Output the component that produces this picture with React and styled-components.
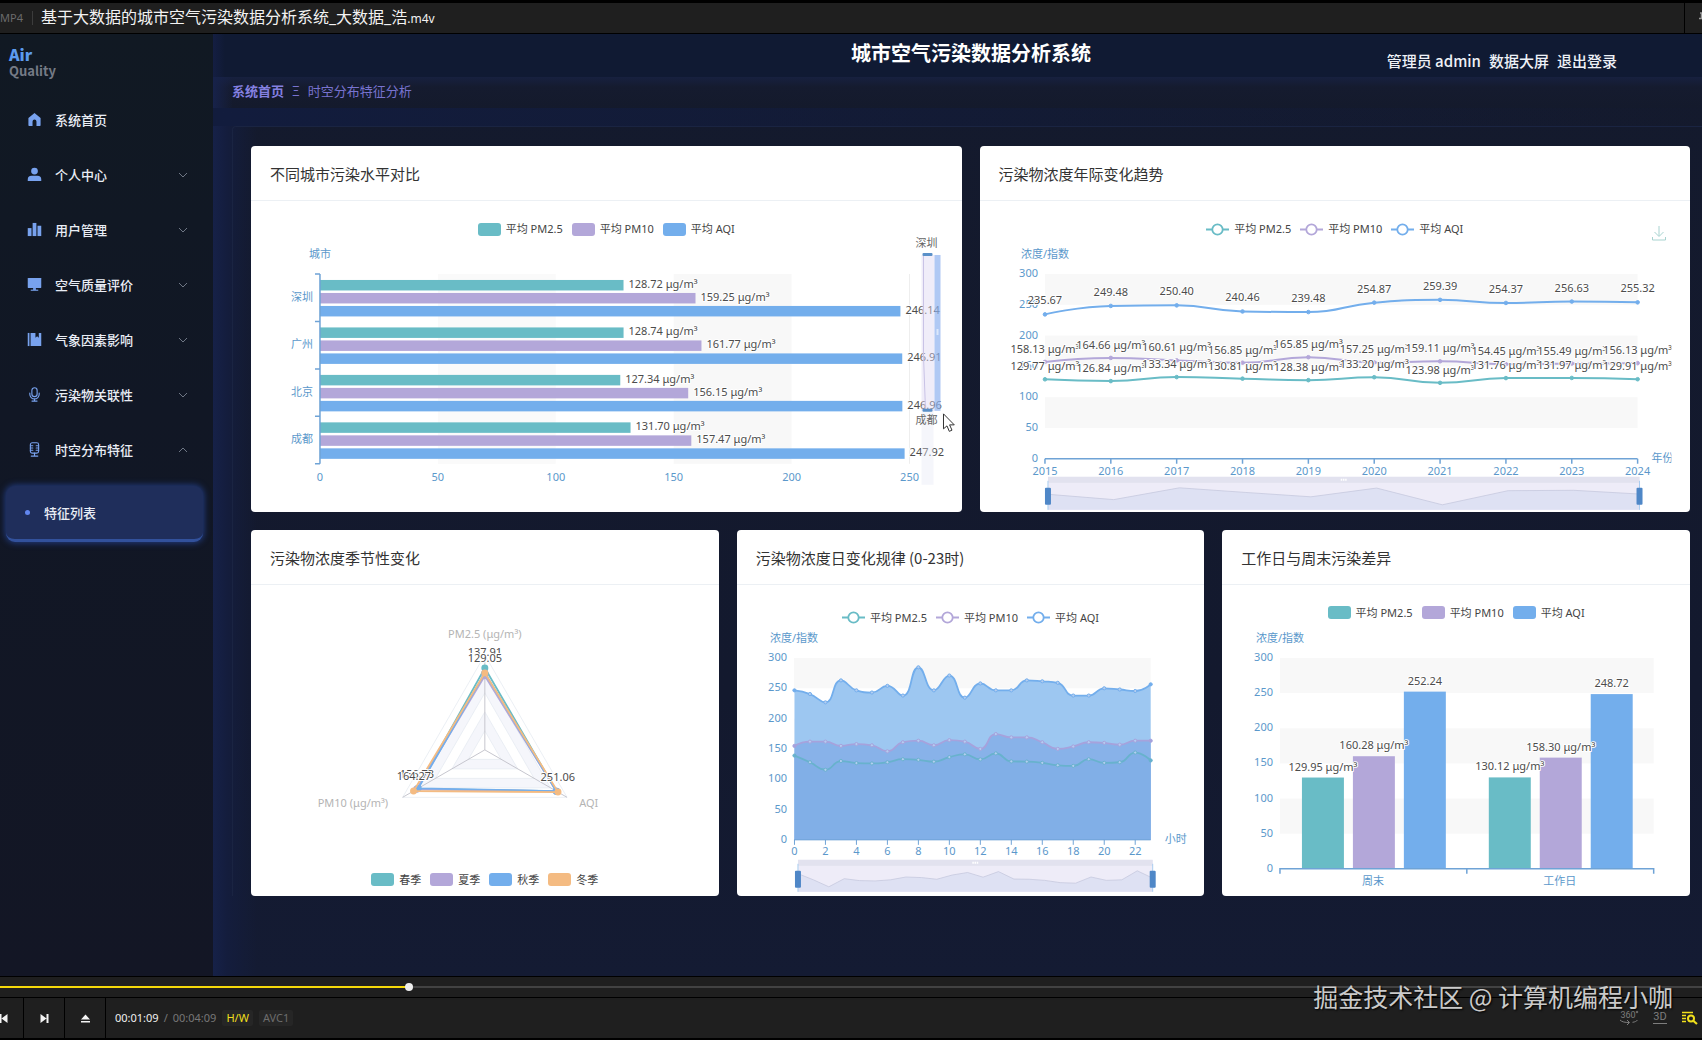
import React from "react";
import styled, { createGlobalStyle, css } from "styled-components";

const C = {
  teal: "#69bcc6",
  purple: "#b3a7d9",
  blue: "#73aeec",
  orange: "#f4bb82",
  axis: "#5b98cb",
  axisLine: "#6fa3d6",
  label: "#4c4c4c",
  band: "#f8f8f8",
};
const uiFont = '"Noto Sans CJK SC", "Noto Sans", sans-serif';
const chartFont = '"Noto Sans", "Noto Sans CJK SC", sans-serif';

const GlobalStyle = createGlobalStyle`
  *, *::before, *::after { box-sizing: border-box; }
  body { margin: 0; background: #000; font-family: ${uiFont}; overflow-x: hidden; }
  h1, h2, ul, ol { margin: 0; padding: 0; list-style: none; }
  button { border: 0; padding: 0; background: none; font: inherit; color: inherit; cursor: pointer; }
  a { color: inherit; text-decoration: none; }
`;

/* ---------- player frame ---------- */

const Frame = styled.div`
  position: relative;
  display: flex;
  flex-direction: column;
  min-height: 100vh;
`;
const TitleBar = styled.header`
  display: flex;
  align-items: center;
  height: 34px;
  border-top: 3px solid #000;
  border-bottom: 1px solid #000;
  background: #1f1f1f;
  color: #f2f2f2;
  font: 16px/30px ${chartFont};
  white-space: nowrap;
  overflow: hidden;
`;
const FileKind = styled.span`
  width: 33px;
  height: 14px;
  border-right: 1px solid #3c3c3c;
  margin-right: 8px;
  font-size: 11px;
  line-height: 14px;
  color: #6b6b6b;
`;
const FileExt = styled.span`
  font-size: 12px;
`;
const PinButton = styled.button`
  flex: none;
  display: flex;
  align-items: center;
  width: 18px;
  height: 30px;
  margin-left: auto;
  padding-left: 13px;
  border-left: 1px solid #000;
  overflow: hidden;
  color: #9a9a9a;
  svg { flex: none; }
`;
const SeekBar = styled.div`
  display: flex;
  align-items: center;
  height: 21px;
  border-top: 1px solid #000;
  background: #1f1f1f;
`;
const SeekInput = styled.input`
  appearance: none;
  width: 100%;
  height: 12px;
  margin: 0;
  background: linear-gradient(#f5d90a, #f5d90a) 0 5px / 24% 2px no-repeat,
    linear-gradient(#424242, #424242) 0 5px / 100% 2px no-repeat;
  &::-webkit-slider-thumb {
    appearance: none;
    width: 8px;
    height: 8px;
    border-radius: 50%;
    background: #eee;
  }
`;
const Controls = styled.footer`
  display: flex;
  align-items: center;
  height: 43px;
  border-top: 1px solid #000;
  border-bottom: 2px solid #000;
  background: #1f1f1f;
  font: 11px/16px ${chartFont};
  color: #777;
`;
const ControlButton = styled.button`
  display: flex;
  align-items: center;
  justify-content: ${(p) => (p.$edge ? "flex-start" : "center")};
  width: ${(p) => (p.$edge ? 24 : 41)}px;
  height: 40px;
  border-right: 1px solid #000;
  color: #f4f4f4;
`;
const Clock = styled.span`
  display: flex;
  gap: 5px;
  margin: 0 6px 0 9px;
  b { font-weight: 400; color: #f0f0f0; }
`;
const Codec = styled.span`
  margin-right: 6px;
  padding: 0 4px;
  border-radius: 2px;
  background: #262626;
  color: ${(p) => (p.$on ? "#f0df1c" : "#6d6d6d")};
`;
const ControlTools = styled.div`
  display: flex;
  align-items: center;
  gap: 14px;
  margin-left: auto;
  padding-right: 4px;
`;
const ToolIcon = styled.button`
  display: flex;
  color: ${(p) => (p.$on ? "#f0df1c" : "#7d7d7d")};
`;
const Watermark = styled.div`
  position: absolute;
  right: 29px;
  bottom: 26px;
  font: 25px/36px ${uiFont};
  color: #cacaca;
  text-shadow: 1px 1px 2px #000;
  white-space: nowrap;
  pointer-events: none;
`;

/* ---------- application ---------- */

const AppShell = styled.div`
  flex: 1;
  display: grid;
  grid-template-columns: 213px minmax(0, 1fr);
  background: #141a2d;
`;
const Sidebar = styled.aside`
  background: linear-gradient(#111923, #111725 40%, #131625);
`;
const Logo = styled.div`
  height: 58px;
  padding: 11px 9px 0;
  font-weight: 700;
  font-size: 13px;
  line-height: 16px;
  color: #757b86;
  strong {
    display: block;
    font-size: 16px;
    line-height: 18px;
    color: #5c9bee;
  }
`;
const MenuButton = styled.button`
  display: grid;
  grid-template-columns: 15px 1fr 10px;
  align-items: center;
  column-gap: 13px;
  width: 100%;
  height: 55px;
  padding: 0 25px 0 27px;
  text-align: left;
  font-size: 13px;
  font-weight: 500;
  color: #e9edf5;
`;
const SubLink = styled.a`
  display: flex;
  align-items: center;
  gap: 14px;
  height: 56px;
  margin: 9px 10px 0 6px;
  padding-left: 19px;
  border-radius: 9px;
  border-bottom: 3px solid #32519b;
  background: #1f2e5b;
  box-shadow: 0 0 6px 1px #223c80;
  font-size: 13px;
  font-weight: 500;
  color: #e9edf5;
  &::before {
    content: "";
    width: 5px;
    height: 5px;
    border-radius: 50%;
    background: #6287f0;
  }
`;
const Content = styled.div`
  min-width: 0;
  background: linear-gradient(90deg, #162148 0, #141d3d 14px, rgba(20, 26, 45, 0) 44px),
    linear-gradient(#141a2d, #13192e 70%, #141b33);
`;
const TopBar = styled.header`
  display: grid;
  grid-template-columns: 1fr auto 1fr;
  height: 43px;
  padding-left: 27px;
  background: linear-gradient(90deg, #141e42 0, rgba(16, 26, 50, 0) 12px), #101a33;
  color: #fff;
`;
const AppTitle = styled.h1`
  grid-column: 2;
  padding-top: 4px;
  font-size: 20px;
  line-height: 30px;
  font-weight: 700;
  white-space: nowrap;
`;
const UserNav = styled.nav`
  justify-self: end;
  display: flex;
  gap: 8px;
  padding: 17px 85px 0 0;
  font-size: 15px;
  line-height: 20px;
  font-weight: 500;
  color: #eef1f7;
  white-space: nowrap;
`;
const Breadcrumb = styled.nav`
  display: flex;
  align-items: center;
  gap: 8px;
  height: 31px;
  padding: 0 0 3px 19px;
  background: linear-gradient(90deg, #17224a 0, rgba(22, 30, 62, 0) 20px),
    linear-gradient(#17203f, #151b2f 10px, #141a2c);
  font-size: 13px;
  line-height: 20px;
  color: #7873cf;
  a { font-weight: 700; color: #8480e0; }
`;
const Stage = styled.main`
  padding: 18px 0 0 19px;
  background: linear-gradient(90deg, #121c3d, rgba(18, 28, 61, 0) 100%) 0 0 / 100% 18px no-repeat;
`;
const Panel = styled.div`
  display: flex;
  flex-direction: column;
  gap: 18px;
  padding: 19px 12px 0 18px;
  border-top: 1px solid #1a2442;
  border-left: 1px solid #1a2442;
  border-radius: 4px 0 0 0;
`;
const CardRow = styled.div`
  display: grid;
  grid-template-columns: repeat(${(p) => p.$columns}, minmax(0, 1fr));
  gap: 18px;
`;
const Card = styled.section`
  display: flex;
  flex-direction: column;
  border-radius: 4px;
  background: #fff;
  overflow: hidden;
`;
const CardTitle = styled.h2`
  height: 55px;
  padding: 0 19px;
  border-bottom: 1px solid #ecf0f4;
  font: 400 15px/56px ${uiFont};
  color: #333;
`;
const LegendRow = styled.div`
  position: relative;
  display: flex;
  justify-content: center;
  gap: 9px;
  padding-top: ${(p) => p.$top}px;
  ${(p) => p.$bottom && css`padding-bottom: ${p.$bottom}px;`}
`;
const LegendItem = styled.button`
  display: flex;
  align-items: center;
  gap: 5px;
  height: 20px;
  font: 11px/20px ${chartFont};
  color: #444;
`;
const Swatch = styled.i`
  width: 23px;
  height: 13px;
  border-radius: 3px;
  background: ${(p) => p.$color};
`;
const SaveButton = styled.button`
  position: absolute;
  top: 24px;
  right: 24px;
  color: #a8d3d0;
  svg { display: block; }
`;
const Chart = styled.svg`
  display: block;
  width: 100%;
  height: auto;
  overflow: visible;
  font: 11px ${chartFont};
  cursor: default;
`;
const AxisText = styled.text`
  fill: ${C.axis};
`;
const DataText = styled.text`
  fill: ${C.label};
  stroke: #fff;
  stroke-width: 2px;
  stroke-linejoin: round;
  paint-order: stroke;
`;

/* ---------- icons ---------- */

const Icon = ({ children, size = 15 }) => (
  <svg width={size} height={size} viewBox="0 0 16 16" fill="currentColor" aria-hidden="true">{children}</svg>
);
const MenuIcon = styled.span`
  display: flex;
  color: #78a2ee;
`;
const line = { fill: "none", stroke: "currentColor", strokeWidth: 1.2, strokeLinecap: "round", strokeLinejoin: "round" };
const icons = {
  home: <path d="M8 1 1.5 6.4V14a.8.8 0 0 0 .8.8h3.6V10a2.1 2.1 0 0 1 4.200 0v4.800h3.600a.8.8 0 0 0 .8-.8V6.400z" />,
  user: <><circle cx="8" cy="4.300" r="3.600" /><path d="M.8 15v-1.800A4 4 0 0 1 4.800 9.200h6.400a4 4 0 0 1 4 4V15z" /></>,
  bars: <><rect x="6" y="1" width="4" height="14" /><rect x=".8" y="6.500" width="4" height="8.500" /><rect x="11.200" y="4" width="4" height="11" /></>,
  screen: <><rect x=".8" y="1" width="14.400" height="10.800" rx=".5" /><rect x="6.500" y="11.800" width="3" height="2" /><rect x="4" y="13.500" width="8" height="1.200" /></>,
  book: <><rect x=".8" y="1" width="1.800" height="14" /><path d="M3.800 1h5.200v5l1.800-1.400L12.600 6V1h2.600v14H3.800z" /></>,
  mic: <g {...line}><rect x="5.200" y=".8" width="5.600" height="9.400" rx="2.800" /><path d="M3 6.500v1.200a5 5 0 0 0 10 0V6.500M8 12.700V15M5.300 15h5.400" /></g>,
  studio: <g {...line}><rect x="3.600" y=".8" width="8.800" height="11" rx="2" /><path d="M3.600 4h2.600M9.800 4h2.600M3.600 6.400h2.600M9.800 6.400h2.600M3.600 8.800h2.600M9.800 8.800h2.600M8 11.800V15M4.500 15h7" /></g>,
};
const Chevron = ({ open }) => (
  <svg width="10" height="6" viewBox="0 0 10 6" fill="none" stroke="#6f7785" aria-hidden="true">
    <path d={open ? "M1 5 5 1l4 4" : "M1 1l4 4 4-4"} />
  </svg>
);

const menu = [
  ["home", "系统首页"],
  ["user", "个人中心", "closed"],
  ["bars", "用户管理", "closed"],
  ["screen", "空气质量评价", "closed"],
  ["book", "气象因素影响", "closed"],
  ["mic", "污染物关联性", "closed"],
  ["studio", "时空分布特征", "open"],
];

/* ---------- chart parts ---------- */

const series3 = [
  ["平均 PM2.5", C.teal],
  ["平均 PM10", C.purple],
  ["平均 AQI", C.blue],
];

function Legend({ items, marker = "box", top = 18, bottom, children }) {
  return (
    <LegendRow $top={top} $bottom={bottom}>
      {items.map(([name, color]) => (
        <LegendItem key={name} type="button">
          {marker === "box" ? (
            <Swatch $color={color} />
          ) : (
            <svg width="23" height="13" viewBox="0 0 23 13" fill="#fff" stroke={color} strokeWidth="1.800" aria-hidden="true">
              <path d="M0 6.500h23" />
              <circle cx="11.500" cy="6.500" r="5.200" />
            </svg>
          )}
          {name}
        </LegendItem>
      ))}
      {children}
    </LegendRow>
  );
}

/* Smooth path whose control points stay inside the box of each segment. */
function smoothPath(pts, k = 0.5) {
  const clamp = (v, a, b) => Math.max(Math.min(a, b), Math.min(Math.max(a, b), v));
  const out = pts.map((p, i) => {
    const a = pts[i - 1];
    const b = pts[i + 1];
    if (!a || !b) return { prev: p, next: p };
    const la = Math.hypot(p[0] - a[0], p[1] - a[1]);
    const lb = Math.hypot(b[0] - p[0], b[1] - p[1]);
    const v = [b[0] - a[0], b[1] - a[1]];
    const r = lb / (la + lb);
    let next = [0, 1].map((d) => clamp(p[d] + v[d] * k * r, p[d], b[d]));
    const prev = [0, 1].map((d) => clamp(p[d] - ((next[d] - p[d]) * la) / lb, a[d], p[d]));
    next = [0, 1].map((d) => p[d] + ((p[d] - prev[d]) * lb) / la);
    return { prev, next };
  });
  return pts.reduce(
    (s, p, i) => (i ? `${s}C${out[i - 1].next} ${out[i].prev} ${p}` : `M${p}`),
    ""
  );
}

function ValueAxis({ left, right, top, bottom, labelX }) {
  const y = (v) => bottom - ((bottom - top) * v) / 300;
  return (
    <g>
      {[300, 200, 100].map((v) => (
        <rect key={v} x={left} y={y(v)} width={right - left} height={y(v - 50) - y(v)} fill={C.band} />
      ))}
      {[0, 50, 100, 150, 200, 250, 300].map((v) => (
        <AxisText key={v} x={labelX} y={y(v) + 3} textAnchor="end">{v}</AxisText>
      ))}
    </g>
  );
}

function Zoomer({ x, y, width, height, values }) {
  const lo = Math.min(...values);
  const hi = Math.max(...values);
  const pts = values.map((v, i) => [
    x + (width * i) / (values.length - 1),
    y + 11 + (1 - (v - lo) / (hi - lo)) * (height - 16),
  ]);
  return (
    <g>
      <rect x={x} y={y} width={width} height={height} fill="#eeecf8" />
      <rect x={x} y={y} width={width} height="6" fill="#e2e2ef" />
      <path d={`M${pts.join("L")}L${x + width} ${y + height}L${x} ${y + height}Z`} fill="#dee1f3" />
      <path d={`M${pts.join("L")}`} fill="none" stroke="#c6c9de" strokeWidth=".8" />
      <path d={`M${x + width / 2 - 3} ${y + 3}h6`} stroke="#fff" strokeWidth="2" strokeDasharray="1.500 .7" />
      {[x, x + width].map((hx) => (
        <g key={hx}>
          <path d={`M${hx} ${y + 4}V${y + height}`} stroke="#a9cdf0" />
          <rect x={hx - 3} y={y + 11} width="6" height="17" rx="1" fill="#4f87c7" />
        </g>
      ))}
    </g>
  );
}

const cities = [
  ["深圳", 128.72, 159.25, 246.14],
  ["广州", 128.74, 161.77, 246.91],
  ["北京", 127.34, 156.15, 246.96],
  ["成都", 131.7, 157.47, 247.92],
];

function CityChart() {
  const x = (v) => 69 + v * 2.36;
  const top = 35;
  const height = 190;
  const step = height / cities.length;
  return (
    <Chart viewBox="0 0 711 273" role="img" aria-label="不同城市污染水平对比">
      <rect x={x(50)} y={top} width="118" height={height} fill="#fafafa" />
      <rect x={x(150)} y={top} width="118" height={height} fill="#f8f8f8" />
      <path d={`M${x(250)} ${top}v${height}`} stroke="#eee" />
      <AxisText x="69" y="19" textAnchor="middle">城市</AxisText>
      {cities.map(([city, ...vals], i) => (
        <g key={city}>
          <AxisText x="62" y={top + step * i + 27} textAnchor="end">{city}</AxisText>
          {vals.map((v, j) => (
            <rect key={j} x="69" y={top + step * i + 6 + 13 * j} width={v * 2.36} height="10.500" fill={series3[j][1]} />
          ))}
        </g>
      ))}
      <path d={`M69 ${top}v${height}${[0, 1, 2, 3, 4].map((i) => `M64 ${top + step * i}h5`).join("")}`} stroke={C.axisLine} strokeWidth="1.500" fill="none" />
      {cities.map(([city, ...vals], i) =>
        vals.map((v, j) => (
          <DataText key={city + j} x={x(v) + 5} y={top + step * i + 14 + 13 * j}>
            {v.toFixed(2)}{j < 2 ? " μg/m³" : ""}
          </DataText>
        ))
      )}
      {[0, 50, 100, 150, 200, 250].map((v) => (
        <AxisText key={v} x={x(v)} y="242" textAnchor="middle">{v}</AxisText>
      ))}
      <rect x="671" y="171" width="12" height="75" fill="#e6e8f4" opacity=".4" />
      <rect x="671" y="16" width="13" height="156" fill="#ddd6f2" opacity=".45" />
      <rect x="684" y="16" width="6" height="156" fill="#8fb2f0" opacity=".7" />
      <path d="M673 17v100l2 54" fill="none" stroke="#c9c3e6" />
      <path d="M687 90v6" stroke="#dbe7fb" strokeWidth="2" />
      <rect x="672" y="14" width="10" height="3" rx="1" fill="#5a90c8" />
      <rect x="672" y="170" width="10" height="3" rx="1" fill="#5a90c8" />
      <text x="676" y="8" textAnchor="middle" fill="#666">深圳</text>
      <text x="676" y="185" textAnchor="middle" fill="#666">成都</text>
      <path d="M693 175v15l3.500-3 2.300 5.500 2.700-1.200-2.400-5.300h4.700z" fill="#fff" stroke="#333" />
    </Chart>
  );
}

const yearly = {
  pm25: [129.77, 126.84, 133.34, 130.81, 128.38, 133.2, 123.98, 131.76, 131.97, 129.91],
  pm10: [158.13, 164.66, 160.61, 156.85, 165.85, 157.25, 159.11, 154.45, 155.49, 156.13],
  aqi: [235.67, 249.48, 250.4, 240.46, 239.48, 254.87, 259.39, 254.37, 256.63, 255.32],
};

function YearChart() {
  const x = (i) => 65 + i * 65.9;
  const y = (v) => 220 - (v * 184) / 300;
  const sets = [
    [yearly.pm25, C.teal, " μg/m³"],
    [yearly.pm10, C.purple, " μg/m³"],
    [yearly.aqi, C.blue, ""],
  ];
  return (
    <Chart viewBox="0 0 711 273" role="img" aria-label="污染物浓度年际变化趋势">
      <clipPath id="yearArea"><rect x="18" y="0" width="674" height="273" /></clipPath>
      <g clipPath="url(#yearArea)">
        <ValueAxis left={65} right={658} top={35} bottom={220} labelX={58} />
        <AxisText x="65" y="19" textAnchor="middle">浓度/指数</AxisText>
        <path d={`M65 220H658${yearly.aqi.map((_, i) => `M${x(i)} 220v5`).join("")}`} stroke={C.axisLine} strokeWidth="1.500" />
        {yearly.aqi.map((_, i) => (
          <AxisText key={i} x={x(i)} y="236" textAnchor="middle">{2015 + i}</AxisText>
        ))}
        <AxisText x="672" y="223">年份</AxisText>
        {sets.map(([vals, color], s) => (
          <g key={s} stroke={color} strokeWidth="2" fill="none">
            <path d={smoothPath(vals.map((v, i) => [x(i), y(v)]))} />
            {vals.map((v, i) => <circle key={i} cx={x(i)} cy={y(v)} r="1.800" fill={color} strokeWidth="1" />)}
          </g>
        ))}
        {sets.map(([vals, , unit]) =>
          vals.map((v, i) => (
            <DataText key={unit + v} x={x(i)} y={y(v) - (unit ? 9 : 10)} textAnchor="middle">{v.toFixed(2)}{unit}</DataText>
          ))
        )}
      </g>
      <Zoomer x={68} y={238} width={592} height={33} values={yearly.pm25} />
    </Chart>
  );
}

const seasons = [
  ["春季", C.teal, [0.863, 0.87, 0.82]],
  ["夏季", C.purple, [0.78, 0.87, 0.83]],
  ["秋季", C.blue, [0.81, 0.87, 0.81]],
  ["冬季", C.orange, [0.81, 0.89, 0.867]],
];

function SeasonChart() {
  const cx = 234;
  const cy = 165;
  const R = 95;
  const dirs = [[0, -1], [0.866, 0.5], [-0.866, 0.5]];
  const tri = (f) => dirs.map(([dx, dy], i) => [cx + dx * R * f[i], cy + dy * R * f[i]]);
  return (
    <Chart viewBox="0 0 468 285" role="img" aria-label="污染物浓度季节性变化">
      {[1, 0.8, 0.6, 0.4, 0.2].map((f, i) => (
        <polygon key={f} points={tri([f, f, f]).join(" ")} fill={i % 2 ? "#f5f6fb" : "#fff"} stroke="#e6ebf1" strokeWidth=".8" />
      ))}
      {tri([1, 1, 1]).map(([px, py], i) => (
        <path key={i} d={`M${cx} ${cy}L${px} ${py}`} stroke="#c6c6ce" />
      ))}
      {seasons.map(([name, color, f]) => (
        <g key={name}>
          <polygon points={tri(f).join(" ")} fill="none" stroke={color} strokeWidth="1.800" />
          {tri(f).map(([px, py], i) => <circle key={i} cx={px} cy={py} r="3.500" fill={color} />)}
        </g>
      ))}
      <DataText x="234" y="71" textAnchor="middle">137.91</DataText>
      <DataText x="234" y="77" textAnchor="middle">129.05</DataText>
      <DataText x="166" y="193" textAnchor="middle">156.73</DataText>
      <DataText x="163" y="195" textAnchor="middle">164.27</DataText>
      <DataText x="307" y="196" textAnchor="middle">251.06</DataText>
      <g fill="#b4b4b4" textAnchor="middle">
        <text x="234" y="53">PM2.5 (μg/m³)</text>
        <text x="102" y="222">PM10 (μg/m³)</text>
        <text x="338" y="222">AQI</text>
      </g>
    </Chart>
  );
}

const hourly = {
  aqi: [246.6, 240.5, 226.8, 263, 246.6, 243, 254, 238, 284.6, 246.6, 271, 234.5, 258, 246.6, 246.6, 263, 261.5, 259, 238, 238, 250, 248, 245.5, 256.5],
  pm10: [155, 162, 162, 155, 158, 156, 146, 161, 163.5, 156, 164.5, 162, 150, 174.5, 169, 169, 161, 150, 154, 161, 160, 157, 163.5, 163.5],
  pm25: [139, 128, 115.6, 130, 126.6, 126, 128, 133, 132, 129, 136.5, 141, 132.7, 142.6, 129.4, 129, 127, 123, 122, 133, 127, 128, 144, 131],
};

function HourChart() {
  const x = (i) => 57.5 + i * 15.5;
  const y = (v) => 212 - (v * 182) / 300;
  const sets = [
    [hourly.aqi, C.blue, "#9dc7f1"],
    [hourly.pm10, "#a6a2dc", "#88b2e9"],
    [hourly.pm25, "#68b2cd", "#81afe7"],
  ];
  return (
    <Chart viewBox="0 0 468 268" role="img" aria-label="污染物浓度日变化规律 (0-23时)">
      <ValueAxis left={57} right={414} top={30} bottom={212} labelX={50} />
      <AxisText x="57" y="14" textAnchor="middle">浓度/指数</AxisText>
      {sets.map(([vals, color, fill]) => {
        const pts = vals.map((v, i) => [x(i), y(v)]);
        const d = smoothPath(pts);
        return (
          <g key={color}>
            <path d={`${d}L${x(23)} 212L${x(0)} 212Z`} fill={fill} />
            <path d={d} fill="none" stroke={color} strokeWidth="1.800" />
            {pts.map(([px, py], i) => (
              <circle key={i} cx={px} cy={py} r="1.600" fill={i % 23 ? "#b4cdf0" : color} stroke={color} />
            ))}
          </g>
        );
      })}
      <path d={`M57 212H414${Array.from({ length: 12 }, (_, i) => `M${x(i * 2)} 212v5`).join("")}`} stroke={C.axisLine} />
      {Array.from({ length: 12 }, (_, i) => (
        <AxisText key={i} x={x(i * 2)} y="227" textAnchor="middle">{i * 2}</AxisText>
      ))}
      <AxisText x="428" y="215">小时</AxisText>
      <Zoomer x={61} y={232} width={355} height={32} values={hourly.pm25} />
    </Chart>
  );
}

const weekdays = [
  ["周末", 129.95, 160.28, 252.24],
  ["工作日", 130.12, 158.3, 248.72],
];

function WeekChart() {
  const h = (v) => v * 0.703;
  const bx = (g, j) => 58 + 187 * g + 22 + 51 * j;
  return (
    <Chart viewBox="0 0 468 273" role="img" aria-label="工作日与周末污染差异">
      <ValueAxis left={58} right={432} top={35} bottom={246} labelX={51} />
      <AxisText x="58" y="19" textAnchor="middle">浓度/指数</AxisText>
      {weekdays.map(([name, ...vals], g) => (
        <g key={name}>
          {vals.map((v, j) => (
            <rect key={j} x={bx(g, j)} y={246 - h(v)} width="42" height={h(v)} fill={series3[j][1]} />
          ))}
          {vals.map((v, j) => (
            <DataText key={j} x={bx(g, j) + 21} y={239 - h(v)} textAnchor="middle">{v.toFixed(2)}{j < 2 ? " μg/m³" : ""}</DataText>
          ))}
          <AxisText x={151 + 187 * g} y="262" textAnchor="middle">{name}</AxisText>
        </g>
      ))}
      <path d="M58 251v-5H432v5M245 246v5" fill="none" stroke={C.axisLine} strokeWidth="1.500" />
    </Chart>
  );
}

/* ---------- page ---------- */

export default function App() {
  return (
    <>
      <GlobalStyle />
      <Frame>
        <TitleBar>
          <FileKind>MP4</FileKind>
          <span>基于大数据的城市空气污染数据分析系统_大数据_浩<FileExt>.m4v</FileExt></span>
          <PinButton type="button" aria-label="置顶">
            <svg width="12" height="12" viewBox="0 0 12 12" fill="none" stroke="currentColor" strokeWidth="1.500">
              <path d="M2 1h8M3.500 1v5M8.500 1v5M1 6.500h10M6 6.500V12" />
            </svg>
          </PinButton>
        </TitleBar>

        <AppShell>
          <Sidebar>
            <Logo><strong>Air</strong>Quality</Logo>
            <nav>
              <ul>
                {menu.map(([icon, name, state]) => (
                  <li key={name}>
                    <MenuButton type="button" aria-expanded={state ? state === "open" : undefined}>
                      <MenuIcon><Icon>{icons[icon]}</Icon></MenuIcon>
                      {name}
                      {state && <Chevron open={state === "open"} />}
                    </MenuButton>
                    {state === "open" && <SubLink href="#features">特征列表</SubLink>}
                  </li>
                ))}
              </ul>
            </nav>
          </Sidebar>

          <Content>
            <TopBar>
              <AppTitle>城市空气污染数据分析系统</AppTitle>
              <UserNav>
                <a href="#admin">管理员 admin</a>
                <a href="#screen">数据大屏</a>
                <a href="#logout">退出登录</a>
              </UserNav>
            </TopBar>
            <Breadcrumb>
              <a href="#home">系统首页</a>
              <span>Ξ</span>
              <span>时空分布特征分析</span>
            </Breadcrumb>
            <Stage>
              <Panel>
                <CardRow $columns={2}>
                  <Card>
                    <CardTitle>不同城市污染水平对比</CardTitle>
                    <Legend items={series3} />
                    <CityChart />
                  </Card>
                  <Card>
                    <CardTitle>污染物浓度年际变化趋势</CardTitle>
                    <Legend items={series3} marker="line">
                      <SaveButton type="button" aria-label="保存为图片">
                        <svg width="14" height="16" viewBox="0 0 14 16" fill="none" stroke="currentColor">
                          <path d="M7 1v10M2.500 7 7 11.500 11.500 7M.5 12v3h13v-3" />
                        </svg>
                      </SaveButton>
                    </Legend>
                    <YearChart />
                  </Card>
                </CardRow>
                <CardRow $columns={3}>
                  <Card>
                    <CardTitle>污染物浓度季节性变化</CardTitle>
                    <SeasonChart />
                    <Legend items={seasons} top={0} bottom={6} />
                  </Card>
                  <Card>
                    <CardTitle>污染物浓度日变化规律 (0-23时)</CardTitle>
                    <Legend items={series3} marker="line" top={23} />
                    <HourChart />
                  </Card>
                  <Card>
                    <CardTitle>工作日与周末污染差异</CardTitle>
                    <Legend items={series3} />
                    <WeekChart />
                  </Card>
                </CardRow>
              </Panel>
            </Stage>
          </Content>
        </AppShell>

        <SeekBar>
          <SeekInput type="range" aria-label="播放进度" min="0" max="1000" defaultValue="239" />
        </SeekBar>
        <Controls>
          <ControlButton type="button" $edge aria-label="上一个">
            <svg width="8" height="9" viewBox="0 0 8 9" fill="currentColor"><path d="M0 0h1.500v9H0zM7.500 0v9L1.500 4.500z" /></svg>
          </ControlButton>
          <ControlButton type="button" aria-label="下一个">
            <svg width="9" height="9" viewBox="0 0 9 9" fill="currentColor"><path d="M.5 0v9l6-4.500zM6.500 0h2v9h-2z" /></svg>
          </ControlButton>
          <ControlButton type="button" aria-label="打开">
            <svg width="9" height="9" viewBox="0 0 9 9" fill="currentColor"><path d="M4.500.5 9 5.500H0zM0 7h9v1.500H0z" /></svg>
          </ControlButton>
          <Clock><b>00:01:09</b><span>/</span><span>00:04:09</span></Clock>
          <Codec $on>H/W</Codec>
          <Codec>AVC1</Codec>
          <ControlTools>
            <ToolIcon type="button" aria-label="全景">
              <svg width="20" height="16" viewBox="0 0 20 16" fill="none" stroke="currentColor">
                <text x="9" y="8" textAnchor="middle" fontSize="9" fill="currentColor" stroke="none" fontFamily="Roboto">360</text>
                <circle cx="18" cy="2" r=".8" />
                <path d="M1 10c2 2 5 2.500 9 2.500M18.500 10c-1 1.300-2.500 2-5 2.300M8 10l2.500 2.500L8 15" />
              </svg>
            </ToolIcon>
            <ToolIcon type="button" aria-label="立体">
              <svg width="14" height="14" viewBox="0 0 14 14" fill="none" stroke="currentColor">
                <text x="7" y="9" textAnchor="middle" fontSize="11" fill="currentColor" stroke="none" fontFamily="Roboto">3D</text>
                <path d="M0 12.500h14" />
              </svg>
            </ToolIcon>
            <ToolIcon type="button" $on aria-label="搜索列表">
              <svg width="17" height="14" viewBox="0 0 17 14" fill="none" stroke="currentColor" strokeWidth="1.400">
                <path d="M1 1.500h11M1 4.500h4M1 7.500h4M1 10.500h4" />
                <circle cx="10" cy="7.500" r="3" strokeWidth="2" />
                <path d="M12.500 10l3.500 3" strokeWidth="2.200" />
              </svg>
            </ToolIcon>
          </ControlTools>
        </Controls>
        <Watermark>掘金技术社区 @ 计算机编程小咖</Watermark>
      </Frame>
    </>
  );
}
